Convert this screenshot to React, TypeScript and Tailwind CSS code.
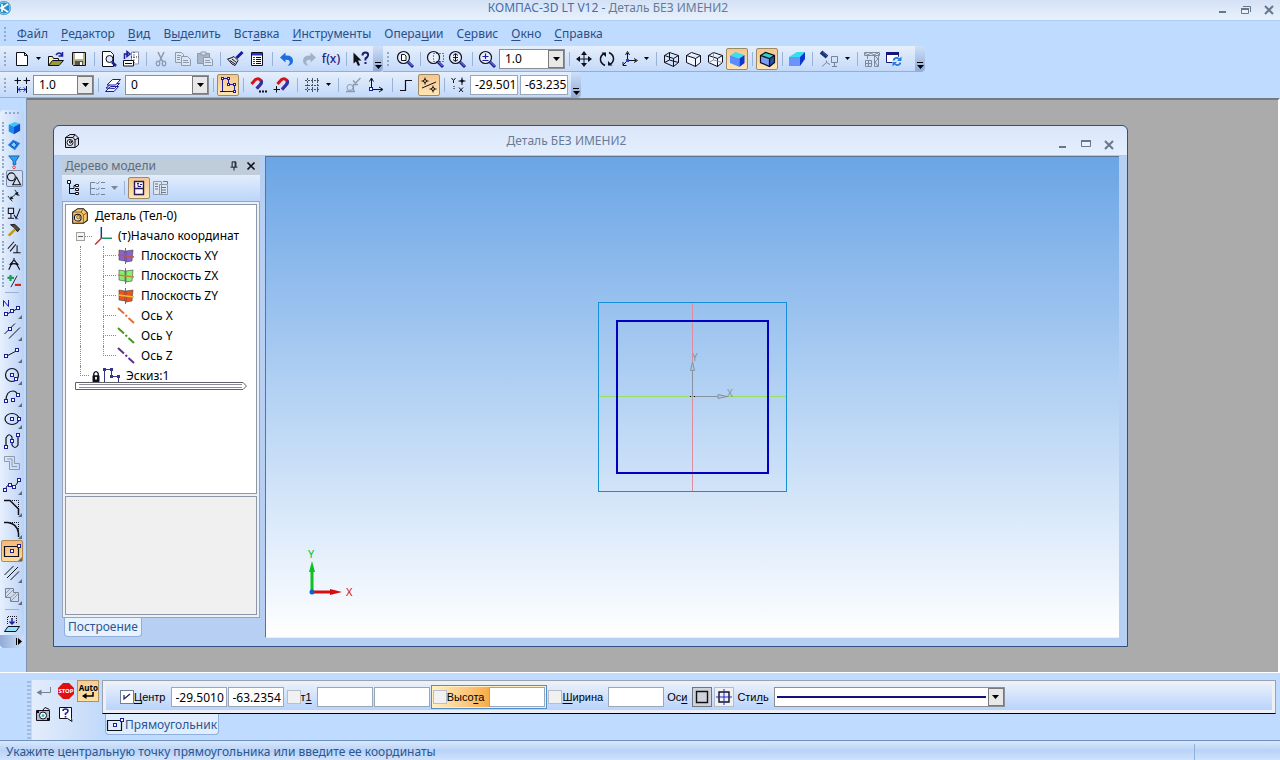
import { ReactNode } from "react";
import clsx from "clsx";

const K = "#10101c";
const N = "#1c1c9c";
const G = "#8d9aae";

// small square used for the sketch nodes, kept on whole pixels
const Node = ({ x, y }: { x: number; y: number }) => (
  <rect x={Math.floor(x) - 1.5} y={Math.floor(y) - 1.5} width="3" height="3" fill="#fff" stroke={N} />
);

const cubeEdges = "M1.500 4.500 L6.500 1.500 L15.500 4.500 V11.500 L10.500 15.500 L1.500 11.500 Z M1.500 4.500 L10.500 7.500 L15.500 4.500 M10.500 7.500 V15.500";

const lens = (
  <>
    <circle cx="6.500" cy="6.500" r="6" fill="#e8f0ff" stroke={K} strokeWidth="1.200" />
    <path d="M11 11 L16 16" stroke={N} strokeWidth="3" />
    <path d="M11.500 11 L15.500 15" stroke="#8aa0ee" />
  </>
);

const icons: Record<string, ReactNode> = {
  doc: <path d="M2.500 1.500 H10.500 L13.500 4.500 V14.500 H2.500 Z M10.500 1.500 V4.500 H13.500" fill="#fff" stroke={K} />,
  open: (
    <>
      <path d="M0.500 14.500 V5.500 H4.500 L5.500 7.500 H10.500 V9" fill="#f5f3a0" stroke={K} />
      <path d="M0.500 14.500 L4.500 9.500 H15.500 L11 14.500 Z" fill="#9a9a3c" stroke={K} />
      <path d="M8 4 Q11 0 14 4 M14.500 1 V5 H10.500" stroke={N} strokeWidth="1.500" fill="none" />
    </>
  ),
  save: (
    <>
      <path d="M1.500 1.500 H14.500 V14.500 H2.500 L1.500 13.500 Z" fill="#b9b283" stroke={K} />
      <path d="M4 2 H12 V8 H4 Z" fill="#fff" />
      <path d="M4 10 H12 V14 H4 Z" fill="#555" />
      <path d="M9 11 H11 V14 H9 Z" fill="#fff" />
    </>
  ),
  preview: (
    <>
      <path d="M1.500 0.500 H9.500 L12.500 3.500 V15.500 H1.500 Z" fill="#fff" stroke={K} />
      <circle cx="8.500" cy="8" r="3.500" fill="#dfe9ff" stroke={K} />
      <path d="M11 11 L15 15" stroke={N} strokeWidth="2.500" />
    </>
  ),
  print: (
    <>
      <path d="M8.500 1 H15.500 V13 H8.500 Z" fill="#fff" stroke={G} />
      <path d="M11 1 V13 M8 6 H16" stroke={K} strokeDasharray="1 1.500" />
      <path d="M0.500 9.500 H10.500 V15 H0.500 Z" fill="#fff" stroke={K} />
      <path d="M2 12.500 H9" stroke={K} />
      <path d="M1.500 8 V3 H5 M4 0.500 L7 3 L4 5.500 Z" stroke={N} strokeWidth="1.500" />
    </>
  ),
  cut: (
    <>
      <path d="M5 1 L9.500 10.500 M11 1 L6.500 10.500" stroke={G} strokeWidth="1.500" />
      <ellipse cx="5" cy="12.500" rx="1.700" ry="2.300" fill="none" stroke={G} strokeWidth="1.300" />
      <ellipse cx="11" cy="12.500" rx="1.700" ry="2.300" fill="none" stroke={G} strokeWidth="1.300" />
    </>
  ),
  copy: (
    <>
      <path d="M0.500 1.500 H6.500 L8.500 3.500 V11.500 H0.500 Z" fill="#dde6f3" stroke={G} />
      <path d="M6.500 5.500 H12.500 L15.500 8.500 V14.500 H6.500 Z" fill="#dde6f3" stroke={G} />
      <path d="M2 4.500 H6 M2 6.500 H5 M2 8.500 H5 M8 9.500 H13 M8 11.500 H14" stroke={G} />
    </>
  ),
  paste: (
    <>
      <path d="M0.500 2.500 H12.500 V12.500 H0.500 Z" fill="#a9b5c6" stroke={G} />
      <path d="M4 1 H9 V4 H4 Z" fill="#d8e0ec" stroke={G} />
      <path d="M6.500 6.500 H13 L15.500 9 V14.500 H6.500 Z" fill="#dde6f3" stroke={G} />
      <path d="M8 9.500 H13 M8 11.500 H14" stroke={G} />
    </>
  ),
  brush: (
    <>
      <path d="M15.500 1 L9.500 7" stroke={N} strokeWidth="3" />
      <path d="M0.500 8 L4 7 L7 5.500 L11 9.500 L8 14.500 L5 13 Z" fill="#d8e2ee" stroke={K} />
      <path d="M3 9.500 L8 13 M5 8 L9.500 11.500" stroke={K} />
    </>
  ),
  props: (
    <>
      <path d="M2.500 1.500 H13.500 V14.500 H2.500 Z" fill="#fff" stroke={K} />
      <path d="M3 2 H13 V4.500 H3 Z" fill="#2236c8" />
      <path d="M4 6.500 H6 M4 8.500 H6 M4 10.500 H6 M4 12.500 H6" stroke="#2236c8" />
      <path d="M7 6.500 H12 M7 8.500 H12 M7 10.500 H12 M7 12.500 H12" stroke={K} />
    </>
  ),
  undo: <path d="M1 6.500 L6.500 1.500 V4.500 Q14 4 14 10 Q14 14 8.500 15 Q11.500 12 10.500 10 Q9.500 8.500 6.500 8.700 V11.500 Z" fill="#1c6fe0" />,
  redo: <path d="M15 6.500 L9.500 1.500 V4.500 Q2 4 2 10 Q2 14 7.500 15 Q4.500 12 5.500 10 Q6.500 8.500 9.500 8.700 V11.500 Z" fill="#a3b1c4" />,
  help: (
    <>
      <path d="M0.500 1.500 V12.500 L3 10.500 L5 15 L7 14 L5 9.500 H8.500 Z" fill={K} />
      <path d="M9.500 4.500 Q9.500 1.500 12.500 1.500 Q15.500 1.500 15 4.500 Q14.500 6.500 12.500 7.500 V9.500 M12.500 11 V13" fill="none" stroke="#1b1b70" strokeWidth="2" />
    </>
  ),
  zoomDoc: (
    <>
      {lens}
      <path d="M4.500 3.500 H7.500 L9 5 V9.500 H4.500 Z" fill="#fff" stroke={K} />
    </>
  ),
  zoomFrame: (
    <>
      {lens}
      <path d="M6.500 2.500 H16.500 V10.500 H6.500 Z" fill="none" stroke={K} strokeDasharray="1 2" />
    </>
  ),
  zoomScale: (
    <>
      {lens}
      <path d="M6.500 3 V10 M4 4.500 L6.500 2.500 L9 4.500 M4 8.500 L6.500 10.500 L9 8.500 M4 6.500 H9" fill="none" stroke={K} />
    </>
  ),
  zoomPlus: (
    <>
      {lens}
      <path d="M6.500 2.500 V8 M3.500 5.500 H9.500 M3.500 9.500 H9.500" stroke={N} strokeWidth="1.200" />
    </>
  ),
  move: (
    <>
      <path d="M8 2 V14 M2 8 H14" stroke={K} />
      <path d="M8 0 L11 4 H5 Z M8 16 L11 12 H5 Z M0 8 L4 5 V11 Z M16 8 L12 5 V11 Z" fill={K} />
    </>
  ),
  rotate: (
    <>
      <path d="M6 14.500 Q1 12 1.500 7.500 Q2 4 5 2.500 M10 1.500 Q15 4 14.500 8.500 Q14 12 11 13.500" fill="none" stroke={K} strokeWidth="1.500" />
      <path d="M2.500 1.500 H7 V6 Z M13.500 14.500 H9 V10 Z" fill={K} />
    </>
  ),
  axes: (
    <>
      <path d="M5.500 2 V9.500 H14 M5.500 9.500 L1 14" fill="none" stroke={K} />
      <path d="M3.500 4 L5.500 0.500 L7.500 4 M12 7.500 L15.500 9.500 L12 11.500 M1 11 V14.500 H4.500" fill="none" stroke={K} />
      <rect x="4" y="8" width="3" height="3" fill="#3040d0" />
    </>
  ),
  cubeWire: (
    <>
      <path d={cubeEdges} fill="none" stroke={K} />
      <path d="M6.500 1.500 V9 L1.500 11.500 M6.500 9 L15.500 11.500" fill="none" stroke={K} />
    </>
  ),
  cubeHidden: <path d={cubeEdges} fill="#f2f7ff" stroke={K} />,
  cubeThin: (
    <>
      <path d={cubeEdges} fill="#f2f7ff" stroke={K} />
      <path d="M6.500 1.500 V9 L1.500 11.500 M6.500 9 L15.500 11.500" fill="none" stroke={G} />
    </>
  ),
  cubeShade: (
    <>
      <path d="M1 4.500 L6.500 1 L15.500 4 L10.500 7.500 Z" fill="#35e2ee" />
      <path d="M1 4.500 L10.500 7.500 V16 L1 12 Z" fill="#5a8cff" />
      <path d="M10.500 7.500 L15.500 4 V12 L10.500 16 Z" fill="#0a37d0" />
    </>
  ),
  cubeShadeWire: (
    <>
      <path d="M1 4.500 L6.500 1 L15.500 4 L10.500 7.500 Z" fill="#2fd6c8" />
      <path d="M1 4.500 L10.500 7.500 V16 L1 12 Z" fill="#7d9cf5" />
      <path d="M10.500 7.500 L15.500 4 V12 L10.500 16 Z" fill="#2850a8" />
      <path d={cubeEdges} fill="none" stroke={K} strokeWidth="1.200" />
    </>
  ),
  persp: (
    <>
      <path d="M0 6 L8 1 H16 L11 6 Z" fill="#2fe0ee" />
      <path d="M0 6 H11 V15 H0 Z" fill="#6a93fb" />
      <path d="M11 6 L16 1 V8 L11 15 Z" fill="#0a37d0" />
    </>
  ),
  lamp: (
    <>
      <path d="M0 1 L6 6" stroke="#15307c" strokeWidth="4" />
      <path d="M2 1.500 L6 5" stroke="#5a86d8" strokeDasharray="1 1" />
      <path d="M5.500 9.500 V11.500 L1 15.500 M5.500 11.500 L9 13.500" stroke="#76849a" />
      <path d="M10.500 5.500 H16.500 V11.500 H10.500 Z M13.500 11.500 V15 M11 15.500 H16" fill="none" stroke="#76849a" />
    </>
  ),
  crane: (
    <>
      <path d="M0.500 1.500 H15.500 V4.500 H0.500 Z M10.500 4.500 V15.500 H14.500 V4.500 M3.500 4.500 V8" fill="none" stroke="#7f8b9c" />
      <path d="M1 2 L4 4 L7 2 L10 4 L13 2 L15 4 M11 5 L14 8 L11 11 L14 15" fill="none" stroke="#7f8b9c" />
      <path d="M1.500 9.500 H7.500 V15.500 H1.500 Z M1.500 12.500 H7.500 M4.500 9.500 V15.500" fill="none" stroke="#7f8b9c" />
    </>
  ),
  refresh: (
    <>
      <path d="M0.500 1.500 H12.500 V11.500 H0.500 Z" fill="#fff" stroke="#15157c" />
      <path d="M0 1 H13 V4 H0 Z" fill="#15157c" />
      <circle cx="11" cy="10.500" r="5" fill="#dfeafc" />
      <path d="M7.500 9.500 Q8.500 6.500 11.500 7 L13.500 8 M14.500 11.500 Q13.500 14.500 10.500 14 L8.500 13" fill="none" stroke="#2878e0" strokeWidth="1.800" />
      <path d="M15.500 5.500 V10 H11 Z M6.500 15.500 V11 H11 Z" fill="#2878e0" />
    </>
  ),
  step: (
    <>
      <path d="M3.500 0.500 V7 M0.500 3.500 H7 M12.500 0.500 V7 M9.500 3.500 H16 M3.500 9 V16 M12.500 9 V16" stroke={K} />
      <path d="M3.500 2 L5 3.500 L3.500 5 L2 3.500 Z M12.500 2 L14 3.500 L12.500 5 L11 3.500 Z" fill={K} />
      <path d="M4 12.500 H12 M6.500 10.500 L4 12.500 L6.500 14.500 M9.500 10.500 L12 12.500 L9.500 14.500" fill="none" stroke="#2630d8" />
    </>
  ),
  layers: (
    <>
      <path d="M0.500 14.500 L5.500 9.500 H13.500 L9 14.500 Z M1 11 L6.500 6.500 H14.500 L9.500 11.500 Z" fill="#e8f0ff" stroke={N} />
      <path d="M2 8 L7.500 2.500 H15.500 L10.500 8 Z" fill="#fff" stroke={N} />
    </>
  ),
  sketch: (
    <>
      <path d="M2.500 2.500 V14.500 M2.500 1.500 H8.500 V7.500 H14.500 V14.500 M2.500 14.500 H14.500" fill="none" stroke={N} />
      <rect x="1.500" y="0.500" width="2" height="2" fill="#fff" stroke={N} />
      <rect x="7.500" y="0.500" width="2" height="2" fill="#fff" stroke={N} />
      <rect x="7.500" y="6.500" width="2" height="2" fill="#fff" stroke={N} />
      <rect x="13.500" y="6.500" width="2" height="2" fill="#fff" stroke={N} />
      <rect x="13.500" y="13.500" width="2" height="2" fill="#fff" stroke={N} />
      <path d="M0 14.500 H5" stroke={K} />
    </>
  ),
  magnetDots: (
    <>
      <path d="M1.500 7 L5 3 Q8 0.500 10.500 3 Q12.500 5.500 10 8 L7 11.500" fill="none" stroke="#d41414" strokeWidth="3" />
      <path d="M10 8 Q12.500 5.500 11 3.500 M10 8 L6.500 11.500" fill="none" stroke="#2038b8" strokeWidth="3" />
      <path d="M9 14.500 H11 M12 14.500 H14 M15 14.500 H17" stroke={K} strokeWidth="2" />
    </>
  ),
  magnetCross: (
    <>
      <path d="M4.500 7 L8 3 Q11 0.500 13.500 3 Q15.500 5.500 13 8 L9 12.500" fill="none" stroke="#d41414" strokeWidth="3" />
      <path d="M13 8 Q15.500 5.500 14 3.500 M13 8 L9 12.500" fill="none" stroke="#2038b8" strokeWidth="3" />
      <path d="M3.500 9 V15.500 M0.500 12.500 H7" stroke={K} />
    </>
  ),
  grid: <path d="M3.500 1 V15 M8.500 1 V15 M13.500 1 V15 M1 3.500 H16 M1 8.500 H16 M1 12.500 H16" stroke="#4c5364" strokeDasharray="2 1" />,
  param: (
    <>
      <circle cx="5" cy="10.500" r="3" fill="none" stroke={G} />
      <path d="M1 14.500 H10 M8.500 14 V7.500 H13 M8 3.500 L10.500 6 L15.500 1" fill="none" stroke={G} strokeWidth="1.300" />
    </>
  ),
  ortho: (
    <>
      <path d="M3.500 2 V12.500 H14" fill="none" stroke={K} />
      <path d="M1.500 4.500 L3.500 1 L5.500 4.500 M11 10 L15 12.500 L11 15" fill="none" stroke={K} />
      <Node x={3.5} y={12.5} />
    </>
  ),
  round: <path d="M1 13.500 H6.500 V3.500 H13" fill="none" stroke={K} strokeWidth="1.200" />,
  snap: (
    <>
      <path d="M1 11 L15 5" stroke={K} />
      <path d="M4 0.500 V7.500 M0.500 4 H7.500 M12 8.500 V15.500 M8.500 12 H15.500" stroke={K} />
      <circle cx="4" cy="4" r="1.500" fill="#f7c878" stroke={K} />
      <circle cx="12" cy="12" r="1.500" fill="#f7c878" stroke={K} />
    </>
  ),
  yx: (
    <>
      <path d="M0.500 1 L2.500 3.500 L4.500 1 M2.500 3.500 V6 M8 10.500 L12 15 M12 10.500 L8 15" fill="none" stroke={K} />
      <path d="M11 0.500 V8 M7.500 4 H14.500" stroke={K} />
      <path d="M11 2 L13 4 L11 6 L9 4 Z" fill={K} />
      <path d="M3 9 V12" stroke={K} strokeDasharray="1 1" />
    </>
  ),
  geomBox: (
    <>
      <path d="M2 4 L9 1 L15 3 L8 6.500 Z" fill="#35c8f4" />
      <path d="M2 4 L8 6.500 V15 L2 12 Z" fill="#1a8cf0" />
      <path d="M8 6.500 L15 3 V11 L8 15 Z" fill="#0a4cd0" />
    </>
  ),
  surface: (
    <>
      <path d="M1 8 L7 2 L15 6 L9 14 Z" fill="#1e78e6" />
      <path d="M4 8 L8 4 L11 8 L8 11 Z" fill="#7fd6fa" stroke="#0a3da8" />
    </>
  ),
  filter: (
    <>
      <path d="M2 1 H14 L10 7 V11 H7 V7 Z" fill="#2aa0f0" stroke="#1858a8" />
      <circle cx="8" cy="14" r="1.500" fill="#fff" stroke="#d02828" />
    </>
  ),
  shapes: (
    <>
      <circle cx="5" cy="5.500" r="4.500" fill="none" stroke={K} strokeWidth="1.200" />
      <path d="M11 6 L15.500 14.500 H6.500 Z" fill="none" stroke={K} strokeWidth="1.200" />
    </>
  ),
  dim: (
    <>
      <path d="M1 8 L6 14 M9 1 L14 8 M4.500 10.500 L11.500 4.500" stroke={K} fill="none" />
      <path d="M3 12 L4.500 8 L7.500 11 Z M13 3.500 L9 4.500 L12 8 Z" fill={K} />
    </>
  ),
  rough: (
    <>
      <path d="M1.500 2.500 H7.500 V8.500 H1.500 Z M4.500 8.500 V14 M1 14 H8 M8 10 L10.500 14 L15 3" fill="none" stroke={K} strokeWidth="1.200" />
      <path d="M9 14.500 H13" stroke="#3848c8" />
    </>
  ),
  hammer: (
    <>
      <path d="M2 14.500 L9 7.500" stroke="#c49a10" strokeWidth="3" />
      <path d="M4 2 L9 1.500 L14.500 7 L12 10 L8.500 5.500 Z" fill="#5a4a2c" stroke={K} />
    </>
  ),
  parPerp: <path d="M1 10 L8 2 M3.500 13 L10 5 M7 14.500 H15.500 M11.500 14.500 V6" fill="none" stroke={K} strokeWidth="1.200" />,
  measure: <path d="M8 1 V4 M7 4 L2 14.500 M9 4 L14.500 14.500 M4.500 9 Q8 6 11.500 9 M8 3.500 L3 9 M8 3.500 L13 9" fill="none" stroke={K} strokeWidth="1.300" />,
  plusMinus: (
    <>
      <path d="M4 1 V8 M0.500 4.500 H8" stroke="#18a050" strokeWidth="2.500" />
      <path d="M4.500 15 L11.500 2" stroke={K} />
      <path d="M9 12.500 H16" stroke="#d82020" strokeWidth="2.500" />
    </>
  ),
  pointN: (
    <>
      <path d="M-0.500 5.500 V-0.500 L4.500 5.500 V-1" fill="none" stroke={N} />
      <path d="M1 14 L15 7" stroke={K} />
      <Node x={2} y={13} />
      <Node x={8} y={10} />
      <Node x={14} y={7} />
    </>
  ),
  parLine: (
    <>
      <path d="M0.500 11 L11 0.500 M5 15.500 L16 4.500" stroke={K} />
      <Node x={6} y={6} />
    </>
  ),
  segment: (
    <>
      <path d="M2 11.500 L14 5" stroke={K} />
      <Node x={2.5} y={11.5} />
      <Node x={13.5} y={5} />
    </>
  ),
  circle: (
    <>
      <circle cx="8" cy="8" r="6.500" fill="none" stroke={K} strokeWidth="1.200" />
      <Node x={8} y={8} />
      <Node x={12.5} y={12.5} />
    </>
  ),
  arc: (
    <>
      <path d="M2 12 Q2 2 9 2 Q12 2 14 6" fill="none" stroke={K} strokeWidth="1.200" />
      <Node x={2} y={12} />
      <Node x={9} y={11} />
      <Node x={14} y={6} />
    </>
  ),
  ellipse: (
    <>
      <ellipse cx="8" cy="8" rx="7" ry="5.500" fill="none" stroke={K} strokeWidth="1.200" />
      <Node x={8} y={8} />
      <Node x={15} y={8} />
    </>
  ),
  curve: (
    <>
      <path d="M2 14 V5 Q5 -1 8 4 V12 Q11 17 14 12 V2" fill="none" stroke={K} strokeWidth="1.200" />
      <Node x={2} y={14} />
      <Node x={8} y={8} />
      <Node x={14} y={2} />
    </>
  ),
  polyGray: <path d="M0.500 1.500 H10.500 V8.500 H15.500 V14.500 H5.500 V6.500 H0.500 Z M3 4 H8 V11.500 H13" fill="none" stroke={G} />,
  spline: (
    <>
      <path d="M1.500 13 Q3 6 7 8.500 Q11 12 14.500 3.500" fill="none" stroke={K} />
      <Node x={1.5} y={13} />
      <Node x={6} y={8} />
      <Node x={10} y={10} />
      <Node x={15} y={3} />
    </>
  ),
  chamfer: (
    <>
      <path d="M0 1.500 H6 L14.500 10 V16" fill="none" stroke={K} strokeWidth="1.500" />
      <path d="M6 1.500 H14.500 V10" fill="none" stroke={K} strokeDasharray="1 1" />
    </>
  ),
  fillet: (
    <>
      <path d="M0 1.500 H4 Q13.500 3 14.500 12 V16" fill="none" stroke={K} strokeWidth="1.500" />
      <path d="M6 1.500 H14.500 V10" fill="none" stroke={K} strokeDasharray="1 1" />
    </>
  ),
  rect: (
    <>
      <path d="M0.500 3.500 H14.500 V13.500 H0.500 Z" fill="none" stroke={K} strokeWidth="1.200" />
      <Node x={8} y={8.5} />
      <Node x={15} y={3.5} />
    </>
  ),
  hatch: <path d="M0.500 10 L9.500 1 M3 13 L14 2 M6.500 15 L15 6.500" stroke={K} />,
  contour: (
    <>
      <path d="M1.500 1.500 H9.500 V5.500 H14.500 V14.500 H6.500 V10.500 H1.500 Z" fill="#d3dcea" stroke="#76849a" />
      <path d="M2 6 L6 2 M2 10 L9 3 M6 11 L12 6 M7 14 L14 7" fill="none" stroke={G} />
    </>
  ),
  project: (
    <>
      <path d="M3.500 8 V0.500 H12.500 V8" fill="none" stroke={K} strokeDasharray="1 1" />
      <path d="M8 2 V7 M5.500 5.500 L8 8 L10.500 5.500" fill="none" stroke={N} strokeWidth="1.500" />
      <path d="M0.500 15.500 L4 10.500 H15.500 L12 15.500 Z" fill="#8fe4f8" stroke={K} />
    </>
  ),
  part: (
    <>
      <path d="M1.500 4.500 L6 1.500 H11 L14.500 5 V12 L11 14.500 H1.500 Z" fill="#d8dce4" stroke={K} />
      <path d="M1.500 4.500 H9 L11 7 V14.500 M9 4.500 L11 1.500 M11 7 L14.500 5" fill="none" stroke={K} />
      <circle cx="6" cy="9.500" r="3" fill="#fff" stroke={K} />
      <circle cx="6.500" cy="9" r="1.200" fill="#aab" stroke={K} />
    </>
  ),
  partGold: (
    <>
      <path d="M1.500 4.500 L6 1.500 H11 L14.500 5 V12 L11 14.500 H1.500 Z" fill="#f8c66e" stroke={K} strokeWidth="0.900" />
      <path d="M1.500 4.500 H9 L11 7 V14.500 M9 4.500 L11 1.500 M11 7 L14.500 5" fill="none" stroke="#6a4a18" strokeWidth="0.700" />
      <circle cx="6" cy="9.500" r="3" fill="#fbe2b0" stroke={K} strokeWidth="0.900" />
      <circle cx="6.500" cy="9" r="1.500" fill="#f8c66e" stroke="#6a4a18" strokeWidth="0.700" />
    </>
  ),
  treeView: (
    <>
      <path d="M3.500 3 V13.500 H10 M3.500 8.500 H8 V5.500 H10" fill="none" stroke={K} />
      <path d="M1.500 0.500 H4.500 V3.500 H1.500 Z M9.500 4.500 H12.500 V6.500 H9.500 Z M9.500 8.500 H12.500 V10.500 H9.500 Z M9.500 12.500 H12.500 V14.500 H9.500 Z" fill="#fff" stroke={K} />
    </>
  ),
  treeList: <path d="M6 2.500 H1.500 V14.500 H6 M1.500 8.500 H6 M7 2.500 L8.500 4 L10.500 1.500 M7 8.500 L8.500 10 L10.500 7.500 M7 14 L8.500 15 L10.500 13 M12 2.500 H16 M12 8.500 H16 M12 14.500 H16" fill="none" stroke="#76849a" />,
  treeDoc: (
    <>
      <path d="M3.500 1.500 H12.500 V14.500 H3.500 Z M3.500 8.500 H12.500" fill="#fdfaff" stroke="#2a1a50" strokeWidth="1.400" />
      <path d="M6 3.500 H8 M7 3.500 V6.500 H10 M9 4.500 H11" fill="none" stroke={N} />
    </>
  ),
  treePages: (
    <>
      <path d="M0.500 1.500 H8.500 V14.500 H0.500 Z M6.500 4.500 H14.500 V14.500 H6.500 Z" fill="#dde6f3" stroke={G} />
      <path d="M2 4 H5 M2 6.500 H5 M2 9 H5 M8 7.500 H13 M8 10 H13 M8 12.500 H13 M10 1.500 H14.500 V4" fill="none" stroke="#6b7890" />
    </>
  ),
  origin: (
    <>
      <path d="M6.500 0 V10" stroke="#2030a0" strokeWidth="1.300" />
      <path d="M6.500 10 H16" stroke="#209060" strokeWidth="1.300" />
      <path d="M6.500 10 L1 15.500" stroke="#c03030" strokeWidth="1.300" />
    </>
  ),
  lock: (
    <>
      <path d="M5.500 8 V5 Q8 1 10.500 5 V8" fill="none" stroke={K} strokeWidth="1.500" />
      <rect x="4" y="7" width="8" height="8" rx="1" fill={K} />
      <rect x="7" y="9" width="2" height="3" fill="#fff" />
    </>
  ),
  sketchTree: (
    <>
      <path d="M1.500 15 V1.500 H8.500 V8.500 H15.500 V15" fill="none" stroke="#34348c" />
      <path d="M0 0 H3 V3 H0 Z M7 0 H10 V3 H7 Z M7 7 H10 V10 H7 Z M14 7 H17 V10 H14 Z" fill="#34348c" />
    </>
  ),
  enter: (
    <>
      <path d="M15.500 4 V9.500 H5" stroke="#77808e" />
      <path d="M6.500 6.500 V12.500 L1.500 9.500 Z" fill="#77808e" />
    </>
  ),
  camera: (
    <>
      <path d="M1.500 4.500 H14.500 V14.500 H1.500 Z" fill="#b7bcc4" stroke={K} />
      <path d="M8 4 L10 1.500 L14.500 3.500" fill="none" stroke={K} />
      <circle cx="8" cy="9.500" r="3.500" fill="#fff" stroke={K} />
      <circle cx="8" cy="9.500" r="1.500" fill="#28c0c8" />
      <path d="M2 5 H4 V7 H2 Z M12 12 H14 V14 H12 Z" fill={K} />
    </>
  ),
  question: (
    <>
      <path d="M1.500 1.500 H13.500 V12.500 L14 15.500 L9.500 12.500 H1.500 Z" fill="#fff" stroke={K} />
      <path d="M5 5 Q5 3 7.500 3 Q10 3 10 5 Q10 6.500 7.500 7.500 V9 M7.500 10 V11.500" fill="none" stroke="#2020a0" strokeWidth="1.600" />
    </>
  ),
  axisBox: <path d="M2.500 2.500 H13.500 V13.500 H2.500 Z" fill="none" stroke={K} strokeWidth="1.400" />,
  axisCross: (
    <>
      <path d="M3 3 H13 V13 H3 Z" fill="none" stroke={K} strokeWidth="1.400" />
      <path d="M8 0 V16 M0 8 H16" stroke="#2222c0" />
    </>
  ),
  pin: <path d="M5.500 2.500 H10.500 V9 M5.500 2.500 V9 M9.500 2.500 V9 M3.500 9.500 H12.500 M8 9.500 V14" fill="none" stroke={K} strokeWidth="1.300" />,
  cross: <path d="M4 4 L12 12 M12 4 L4 12" stroke={K} strokeWidth="2" />,
  winMin: <path d="M4 11 H11 V13 H4 Z" fill="#66778f" />,
  winMax: (
    <>
      <path d="M3.500 5.500 H12.500 V11.500 H3.500 Z" fill="#eaf1fb" stroke="#66778f" />
      <path d="M3 5 H13 V7 H3 Z" fill="#66778f" />
    </>
  ),
  winRestore: (
    <>
      <path d="M5 6.500 H12.500 V12" fill="none" stroke="#66778f" />
      <path d="M3.500 8.500 H10.500 V13.500 H3.500 Z" fill="#eaf1fb" stroke="#66778f" />
      <path d="M3 8 H11 V10 H3 Z" fill="#66778f" />
    </>
  ),
  winClose: <path d="M4 6 L12 14 M12 6 L4 14" stroke="#66778f" strokeWidth="2" />,
  logo: (
    <>
      <circle cx="4" cy="8" r="7" fill="#2b8cc8" />
      <path d="M-2 8 H2 M2 4 V12 M2 8 L8 4 M2 8 L8 12" stroke="#fff" strokeWidth="1.600" fill="none" />
      <circle cx="4" cy="8" r="6" fill="none" stroke="#9ed2f0" />
    </>
  ),
};

function Icon({ name, className = "h-4 w-4" }: { name: string; className?: string }) {
  return (
    <svg viewBox="0 0 16 16" fill="none" aria-hidden="true" className={clsx("shrink-0 overflow-visible", className)}>
      {icons[name]}
    </svg>
  );
}

// "_" goes before the underlined hot key letter
function Hot({ text }: { text: string }) {
  const [before, after] = text.split("_");
  return (
    <span>
      {before}
      <u className="underline-offset-2">{after[0]}</u>
      {after.slice(1)}
    </span>
  );
}

function Tool({ name, label, active, className = "w-[22px]" }: { name: string; label: string; active?: boolean; className?: string }) {
  return (
    <button
      aria-label={label}
      className={clsx(
        "flex h-[22px] shrink-0 items-center justify-center rounded-xs border",
        active ? "border-[#9c8a64] bg-linear-to-b from-[#f5c690] to-[#ffe6b4]" : "border-transparent",
        className
      )}
    >
      <Icon name={name} />
    </button>
  );
}

const Sep = () => (
  <span className="flex w-2 shrink-0 justify-center">
    <span className="h-[14px] border-l border-[#9ab2d6]" />
  </span>
);

const Grip = () => <span className="mr-[5px] ml-1 h-[14px] w-0.5 shrink-0 border-l-2 border-dotted border-[#8fa9cf]" />;

const Arrow = ({ className = "text-black" }: { className?: string }) => (
  <svg viewBox="0 0 7 4" aria-hidden="true" className={clsx("h-1 w-[7px] shrink-0", className)}>
    <path d="M0 0 H7 L3.500 4 Z" fill="currentColor" />
  </svg>
);

const Drop = ({ label }: { label: string }) => (
  <button aria-label={label} className="flex h-[22px] w-[11px] shrink-0 items-center justify-center">
    <svg viewBox="0 0 5 3" className="h-[3px] w-[5px]">
      <path d="M0 0 H5 L2.500 3 Z" fill="#000" />
    </svg>
  </button>
);

const Overflow = () => (
  <button aria-label="Параметры панелей" className="flex w-[10px] shrink-0 flex-col items-center justify-end gap-0.5 self-stretch rounded-r-sm bg-linear-to-b from-[#cfe0f8] to-[#8fabd6] pb-0.5">
    <span className="h-px w-[6px] bg-black" />
    <Arrow />
  </button>
);

const Strip = ({ label, children }: { label: string; children: ReactNode }) => (
  <div role="toolbar" aria-label={label} className="flex h-[26px] items-center rounded-r-sm border-b border-[#8fb0dd] bg-linear-to-b from-[#e6effc] to-[#c3d9fa]">
    {children}
  </div>
);

function Combo({ value, label, className }: { value: string; label: string; className: string }) {
  return (
    <span className={clsx("relative flex h-5 shrink-0 border border-[#8b9096] bg-white", className)}>
      <select aria-label={label} className="w-full appearance-none bg-transparent pl-[5px] text-xs leading-4 text-black">
        <option>{value}</option>
      </select>
      <span className="pointer-events-none absolute inset-y-0 right-0 flex w-4 items-center justify-center border border-[#7a7a7a] bg-[#e8e8e8]">
        <Arrow />
      </span>
    </span>
  );
}

const Field = ({ value = "", label, className }: { value?: string; label: string; className: string }) => (
  <input aria-label={label} defaultValue={value} className={clsx("h-5 shrink-0 border border-[#98a7bb] bg-white pl-1 text-xs text-black outline-none", className)} />
);

function Check({ label, checked }: { label: string; checked?: boolean }) {
  return (
    <label className="flex shrink-0 items-center font-['Liberation_Sans',Arial,sans-serif] text-[11px] text-black">
      <span className="relative flex h-[14px] w-[14px]">
        <input
          type="checkbox"
          defaultChecked={checked}
          className="peer h-[14px] w-[14px] appearance-none border border-[#b9bfc8] bg-[#f1f1f1] checked:border-[#6f7f95] checked:bg-white"
        />
        <svg viewBox="0 0 14 14" className="pointer-events-none absolute inset-0 hidden h-[14px] w-[14px] peer-checked:block">
          <path d="M4 5 V9 L10 4" fill="none" stroke="#1c1c60" strokeWidth="1.200" />
        </svg>
      </span>
      <Hot text={label} />
    </label>
  );
}

const menu = ["_Файл", "_Редактор", "_Вид", "В_ыделить", "Вст_авка", "_Инструменты", "Опера_ции", "С_ервис", "_Окно", "_Справка"];

const modes = [
  ["geomBox", "Редактирование детали"],
  ["surface", "Поверхности"],
  ["filter", "Фильтры"],
  ["shapes", "Геометрия"],
  ["dim", "Размеры"],
  ["rough", "Обозначения"],
  ["hammer", "Редактирование"],
  ["parPerp", "Параметризация"],
  ["measure", "Измерения"],
  ["plusMinus", "Выделение"],
];

const geometry = [
  ["pointN", "Точки"],
  ["parLine", "Вспомогательные прямые"],
  ["segment", "Отрезок"],
  ["circle", "Окружность"],
  ["arc", "Дуга"],
  ["ellipse", "Эллипс"],
  ["curve", "Непрерывный ввод"],
  ["polyGray", "Линия"],
  ["spline", "Кривая"],
  ["chamfer", "Фаска"],
  ["fillet", "Скругление"],
  ["rect", "Прямоугольник"],
  ["hatch", "Штриховка"],
  ["contour", "Собрать контур"],
];
const noFlyout = ["curve", "polyGray"];

const planes = [
  { name: "Плоскость XY", fill: "#8a62d8", line: "#c05848" },
  { name: "Плоскость ZX", fill: "#86f070", line: "#d08040" },
  { name: "Плоскость ZY", fill: "#ea5420", line: "#f0c030" },
];
const axes = [
  { name: "Ось X", color: "#e07040" },
  { name: "Ось Y", color: "#489820" },
  { name: "Ось Z", color: "#5a3090" },
];

function TitleBar() {
  return (
    <header className="relative flex h-[21px] items-start justify-between border-b border-[#a9cdf0] bg-linear-to-b from-[#d5e2f5] to-[#e8f1fd]">
      <Icon name="logo" />
      <h1 className="absolute inset-x-0 top-0 -translate-x-8 text-center text-xs leading-4 text-[#687b96]">
        <span className="text-[#4a6da8]">КОМПАС-3D LT V12 - </span>Деталь БЕЗ ИМЕНИ2
      </h1>
      <WindowButtons middle="winRestore" />
    </header>
  );
}

function WindowButtons({ middle }: { middle: string }) {
  return (
    <div className="relative flex gap-[7px] pr-[3px]">
      <button aria-label="Свернуть"><Icon name="winMin" /></button>
      <button aria-label="Развернуть"><Icon name={middle} /></button>
      <button aria-label="Закрыть"><Icon name="winClose" /></button>
    </div>
  );
}

function StandardBar() {
  return (
    <Strip label="Стандартная">
      <Grip />
      <Tool name="doc" label="Создать" />
      <Drop label="Вид документа" />
      <Tool name="open" label="Открыть" className="w-6" />
      <Tool name="save" label="Сохранить" />
      <Sep />
      <Tool name="preview" label="Просмотр" />
      <Tool name="print" label="Печать" />
      <Sep />
      <Tool name="cut" label="Вырезать" />
      <Tool name="copy" label="Копировать" />
      <Tool name="paste" label="Вставить" />
      <Sep />
      <Tool name="brush" label="Копия свойств" />
      <Tool name="props" label="Свойства" />
      <Sep />
      <Tool name="undo" label="Отменить" />
      <Tool name="redo" label="Повторить" />
      <button className="w-[22px] text-xs font-medium text-[#20208c]">f(x)</button>
      <Sep />
      <Tool name="help" label="Справка" className="mr-px w-[22px]" />
      <Overflow />
    </Strip>
  );
}

function ViewBar() {
  return (
    <Strip label="Вид">
      <Grip />
      <Tool name="zoomDoc" label="Показать все" />
      <Sep />
      <Tool name="zoomFrame" label="Увеличить рамкой" />
      <Tool name="zoomScale" label="Масштаб" />
      <Sep />
      <Tool name="zoomPlus" label="Приблизить" className="mr-px w-[22px]" />
      <Combo value="1.0" label="Текущий масштаб" className="w-[66px]" />
      <Sep />
      <Tool name="move" label="Сдвинуть" />
      <Tool name="rotate" label="Повернуть" className="w-6" />
      <Tool name="axes" label="Ориентация" />
      <Drop label="Список ориентаций" />
      <Sep />
      <Tool name="cubeWire" label="Каркас" />
      <Tool name="cubeHidden" label="Без невидимых линий" />
      <Tool name="cubeThin" label="Невидимые линии тонкие" />
      <Tool name="cubeShade" label="Полутоновое" active />
      <Sep />
      <Tool name="cubeShadeWire" label="Полутоновое с каркасом" active />
      <Sep />
      <Tool name="persp" label="Перспектива" />
      <Sep />
      <Tool name="lamp" label="Упрощения" className="w-[26px]" />
      <Drop label="Список упрощений" />
      <Sep />
      <Tool name="crane" label="Перестроить" />
      <Tool name="refresh" label="Обновить" className="mr-[10px] w-[22px]" />
      <Overflow />
    </Strip>
  );
}

function StateBar() {
  return (
    <Strip label="Текущее состояние">
      <Grip />
      <Tool name="step" label="Шаг курсора" />
      <Combo value="1.0" label="Шаг" className="w-[61px]" />
      <Sep />
      <Tool name="layers" label="Слои" className="mr-px w-[22px]" />
      <Combo value="0" label="Слой" className="w-[84px]" />
      <Sep />
      <Tool name="sketch" label="Эскиз" active />
      <Sep />
      <Tool name="magnetDots" label="Привязки" />
      <Tool name="magnetCross" label="Запретить привязки" className="w-6" />
      <Sep />
      <Tool name="grid" label="Сетка" />
      <Drop label="Настройка сетки" />
      <Sep />
      <Tool name="param" label="Параметрический режим" />
      <Tool name="ortho" label="Локальная СК" className="w-6" />
      <Sep />
      <Tool name="round" label="Ортогональное черчение" />
      <Tool name="snap" label="Округление" active />
      <Sep />
      <Tool name="yx" label="Координаты" />
      <Field value="-29.501" label="X" className="w-12" />
      <Field value="-63.235" label="Y" className="mr-[3px] ml-0.5 w-12" />
      <Overflow />
    </Strip>
  );
}

function SideBar() {
  return (
    <aside className="flex w-[27px] shrink-0 flex-col border-r border-[#8093ad] pt-3">
      <div className="mr-0.5 flex flex-col items-center rounded-t-sm bg-linear-to-r from-[#e6f0fe] to-[#bdd3f5]">
        <span className="mt-0.5 mb-[5px] w-[14px] border-t-2 border-dotted border-[#8fa9cf]" />
        {modes.map(([name, label]) => (
          <div key={name} className="flex h-[17px] items-center">
            <span className="mr-0.5 h-3 border-l-2 border-dotted border-[#8fa9cf]" />
            <button
              aria-label={label}
              className={clsx("flex h-[17px] w-[17px] items-center justify-center rounded-xs", name === "shapes" && "border border-[#7b8aa6] bg-[#d5dff0]")}
            >
              <Icon name={name} className="h-[14px] w-[14px]" />
            </button>
          </div>
        ))}
        <span className="mt-[3px] mb-[5px] w-[14px] border-t border-[#9ab2d6]" />
        {geometry.map(([name, label]) => (
          <button
            key={name}
            aria-label={label}
            className={clsx(
              "relative flex h-[22px] w-[22px] items-center justify-center rounded-xs border",
              name === "rect" ? "border-[#b08850] bg-linear-to-b from-[#f5b878] to-[#ffdca0]" : "border-transparent"
            )}
          >
            <Icon name={name} />
            {!noFlyout.includes(name) && (
              <svg viewBox="0 0 4 4" className="absolute right-0 bottom-0 h-1 w-1">
                <path d="M4 0 V4 H0 Z" fill="#5d6b80" />
              </svg>
            )}
          </button>
        ))}
        <span className="my-[3px] w-[14px] border-t border-[#9ab2d6]" />
        <Tool name="project" label="Спроецировать объект" />
        <button aria-label="Развернуть панель" className="flex h-[13px] w-full items-center justify-end rounded-b-sm bg-linear-to-r from-[#8fabd6] to-[#cfe0f8] pr-0.5">
          <svg viewBox="0 0 6 7" className="h-[7px] w-[6px]">
            <path d="M0.500 0 V7" stroke="#000" />
            <path d="M2 0 L6 3.500 L2 7 Z" fill="#000" />
          </svg>
        </button>
      </div>
    </aside>
  );
}

const dash = "border-[#8a8a8a] border-dotted";

// dotted connector of the nested tree rows
const Branch = ({ last }: { last?: boolean }) => (
  <>
    <span className={clsx("w-[23px] self-stretch border-l", dash)} />
    <span className="flex w-[13px] flex-col self-stretch">
      <span className={clsx("h-2.5 border-b border-l", dash)} />
      {!last && <span className={clsx("flex-1 border-l", dash)} />}
    </span>
  </>
);

function ModelTree() {
  return (
    <ul className="flex-1 border border-[#8c98a8] bg-white pt-px text-xs text-black">
      <li className="flex h-5 items-center pl-[5px]">
        <Icon name="partGold" className="mr-1.5 h-[18px] w-[18px]" />
        Деталь (Тел-0)
      </li>
      <li className="flex h-5 items-center pl-[10px]">
        <button aria-label="Свернуть ветвь" className="flex h-[9px] w-[9px] items-center justify-center border border-[#a0a0a0] bg-[#f4f4f4]">
          <span className="h-px w-[5px] bg-[#606060]" />
        </button>
        <span className={clsx("mr-0.5 w-[7px] border-t", dash)} />
        <Icon name="origin" className="mr-1.5 h-[18px] w-[18px]" />
        (т)Начало координат
      </li>
      {planes.map((p) => (
        <li key={p.name} className="flex h-5 items-center pl-[14px]">
          <Branch />
          <svg viewBox="0 0 16 16" className="mr-[7px] ml-0.5 h-4 w-4">
            <path d="M1 2 L7 3 V13 L1 12 Z M8 3 L15 2 L14 13 L8 14 Z" fill={p.fill} stroke="#444" strokeWidth="0.600" />
            <path d="M7.500 0 V16" stroke="#5a70a0" />
            <path d="M0 7 L16 9" stroke={p.line} strokeWidth="1.300" />
          </svg>
          {p.name}
        </li>
      ))}
      {axes.map((a, i) => (
        <li key={a.name} className="flex h-5 items-center pl-[14px]">
          <Branch last={i === axes.length - 1} />
          <svg viewBox="0 0 18 18" className="mr-1.5 ml-px h-[18px] w-[18px]">
            <path d="M1 1 L7 6.500 M8.500 8 L10 9.500 M11.500 11 L17 16" stroke={a.color} strokeWidth="2" />
          </svg>
          {a.name}
        </li>
      ))}
      <li className="flex h-5 items-center pl-[14px]">
        <span className={clsx("h-2.5 w-[9px] self-start border-b border-l", dash)} />
        <Icon name="lock" className="h-[14px] w-[14px]" />
        <Icon name="sketchTree" className="mr-[7px] h-4 w-4" />
        Эскиз:1
      </li>
      <li className="relative -mt-1 pr-[9px] pl-[9px]">
        <svg viewBox="0 0 172 8" preserveAspectRatio="none" className="h-2 w-full">
          <path d="M0.500 0.500 H168 L171.500 4 L168 7.500 H0.500 Z" fill="#fff" stroke="#606068" />
          <path d="M4 2.500 H167 M4 5.500 H167" stroke="#8c8c9c" />
        </svg>
      </li>
    </ul>
  );
}

function TreePanel() {
  return (
    <section className="flex w-[198px] shrink-0 flex-col pt-px">
      <div className="flex h-[18px] items-center bg-[#bfcddb] pr-0.5 pl-[3px]">
        <h3 className="flex-1 text-xs text-[#5c6b80]">Дерево модели</h3>
        <button aria-label="Закрепить" className="mr-1"><Icon name="pin" className="h-3 w-3" /></button>
        <button aria-label="Закрыть панель"><Icon name="cross" className="h-[14px] w-[14px]" /></button>
      </div>
      <div className="flex h-[26px] items-center bg-linear-to-b from-[#e2edfc] to-[#bcd5fa] pl-px">
        <Tool name="treeView" label="Отображение структуры" />
        <Tool name="treeList" label="Состав дерева" className="w-6" />
        <button aria-label="Выбор состава" className="flex w-[11px] justify-center"><Arrow className="text-[#7b8799]" /></button>
        <Sep />
        <Tool name="treeDoc" label="Раздел" active />
        <Tool name="treePages" label="Дополнительное окно" />
      </div>
      <div className="flex flex-1 flex-col gap-0.5 border border-[#98a5b8] bg-[#edf0f4] p-0.5">
        <ModelTree />
        <div className="h-[119px] border border-[#8c98a8] bg-[#f1f0f0]" />
      </div>
      <div className="flex h-5 items-start pl-0.5">
        <button className="h-[19px] rounded-b-sm border border-t-0 border-[#8fb0dd] bg-[#e8f2ff] px-[3px] text-xs leading-[18px] text-[#2b568f]">Построение</button>
      </div>
    </section>
  );
}

function Viewport() {
  return (
    <section aria-label="Модель" className="relative flex flex-1 items-center justify-center border-t border-b border-l border-t-[#5c7391] border-b-[#e6effc] border-l-[#5c7391] bg-linear-to-b from-[#6aa5e5] to-white">
      <svg viewBox="0 0 189 190" className="h-[190px] w-[189px]">
        <rect x="0.500" y="0.500" width="188" height="189" fill="none" stroke="#1490d8" />
        <path d="M94.500 1 V189" stroke="#e08ca0" />
        <path d="M1 94.500 H188" stroke="#98e060" />
        <path d="M94.500 94.500 V62 M94.500 94.500 H130" stroke="#8492a4" />
        <path d="M92.500 68.500 L94.500 60 L96.500 68.500 Z M120 92.500 L129 94.500 L120 96.500 Z" fill="#b5c4d6" stroke="#8492a4" />
        <rect x="19" y="19" width="151" height="152" fill="none" stroke="#0000c0" strokeWidth="2" />
        <path d="M92 94.500 H93 M96 94.500 H97" stroke="#000" />
        <text x="94" y="59" fontSize="10" fill="#8492a4">Y</text>
        <text x="129" y="95" fontSize="10" fill="#8492a4">X</text>
      </svg>
      <svg viewBox="0 0 54 54" className="absolute bottom-9 left-9 h-[54px] w-[54px]">
        <path d="M10 45 V22" stroke="#10c020" strokeWidth="3" />
        <path d="M10 14 L13 25 H7 Z" fill="#10c020" />
        <path d="M10 45 H29" stroke="#d80c0c" strokeWidth="3" />
        <path d="M40 45 L28 48 V42 Z" fill="#d80c0c" />
        <circle cx="10" cy="45" r="2.500" fill="#1060d0" />
        <text x="6" y="11" fontSize="11" fill="#10c020">Y</text>
        <text x="44" y="49" fontSize="11" fill="#d80c0c">X</text>
      </svg>
    </section>
  );
}

function PropertyPanel() {
  return (
    <footer className="border-t border-white pt-[7px] pr-1 pl-[27px]">
      <div className="flex">
        <span className="my-px mr-px w-1 border-x-2 border-dotted border-[#a5bbdc]" />
        <div className="grid w-[68px] shrink-0 grid-cols-3 content-start gap-y-px bg-linear-to-r from-[#e3edfc] to-[#c3daf9] pb-3">
          <Tool name="enter" label="Создать объект" />
          <button aria-label="Прервать команду" className="flex h-[22px] w-[22px] items-center justify-center">
            <svg viewBox="0 0 16 16" className="h-4 w-4">
              <path d="M5 0 H11 L16 5 V11 L11 16 H5 L0 11 V5 Z" fill="#e01010" />
              <text x="8" y="10" textAnchor="middle" fontSize="6" fontWeight="700" fill="#fff">STOP</text>
            </svg>
          </button>
          <button className="flex h-[22px] w-[22px] flex-col items-center justify-center border border-[#b09060] bg-linear-to-b from-[#f8cd98] to-[#ffe0a0] text-[8px] leading-[9px] font-bold text-black">
            Auto
            <svg viewBox="0 0 12 7" className="h-[7px] w-3">
              <path d="M11 0 V4 H4" fill="none" stroke="#000" strokeWidth="1.500" />
              <path d="M0 4 L4.500 1 V7 Z" fill="#000" />
            </svg>
          </button>
          <Tool name="camera" label="Запомнить состояние" />
          <Tool name="question" label="Справка" />
        </div>
        <div className="ml-0.5 flex min-w-0 flex-1 flex-col">
          <form aria-label="Свойства прямоугольника" className="flex h-[34px] items-center border-t border-r border-b border-l border-t-[#98a2b0] border-r-[#98a2b0] border-b-black border-l-[#98a2b0] bg-[#eef0f6] p-[3px]">
            <div className="flex h-full flex-1 items-center bg-linear-to-b from-[#e8effb] to-[#b9d3fb] pl-[14px]">
              <Check label="_Центр" checked />
              <Field value="-29.5010" label="Центр X" className="ml-[5px] w-14" />
              <Field value="-63.2354" label="Центр Y" className="mr-[3px] ml-px w-14" />
              <Check label="т_1" />
              <Field label="т1 X" className="ml-[5px] w-14" />
              <Field label="т1 Y" className="mx-px w-14" />
              <div className="mr-px flex h-6 items-center border border-[#4f8fd0] bg-[#fff0c0] px-px">
                <div className="flex h-5 items-center bg-linear-to-r from-[#fff0c0] to-[#f8ac48] pr-[5px]">
                  <Check label="Высо_та" />
                </div>
                <Field label="Высота" className="w-14" />
              </div>
              <Check label="_Ширина" />
              <Field label="Ширина" className="mr-[3px] ml-[5px] w-14" />
              <span className="font-['Liberation_Sans',Arial,sans-serif] text-[11px] text-black"><Hot text="Ос_и" /></span>
              <button type="button" aria-label="Без осей" className="ml-[5px] flex h-5 w-5 items-center justify-center border border-[#6f7780] bg-[#d0d3d8]">
                <Icon name="axisBox" />
              </button>
              <button type="button" aria-label="С осями" className="ml-0.5 flex h-5 w-5 items-center justify-center border border-[#b4bcc8] bg-[#eef1f5]">
                <Icon name="axisCross" />
              </button>
              <label htmlFor="style" className="ml-[3px] font-['Liberation_Sans',Arial,sans-serif] text-[11px] text-black"><Hot text="Сти_ль" /></label>
              <span className="relative ml-[5px] flex h-5 w-[231px] items-center border border-[#8b9096] bg-white">
                <select id="style" className="absolute inset-0 h-full w-full appearance-none bg-transparent">
                  <option />
                </select>
                <span className="pointer-events-none mx-0.5 h-0.5 flex-1 bg-[#12127a]" />
                <span className="pointer-events-none flex h-full w-4 items-center justify-center border border-[#7a7a7a] bg-[#e8e8e8]">
                  <Arrow />
                </span>
              </span>
            </div>
          </form>
          <div className="flex h-[26px] items-start pl-[3px]">
            <button className="flex h-[21px] items-center gap-0.5 rounded-b-sm border border-t-0 border-[#8fb0dd] bg-[#e0edff] px-px pt-px text-xs text-[#2b568f]">
              <Icon name="rect" />
              Прямоугольник
            </button>
          </div>
        </div>
      </div>
    </footer>
  );
}

export default function App() {
  return (
    <div className="flex min-h-screen flex-col overflow-hidden bg-[#bfdbff] font-['Noto_Sans','Open_Sans',sans-serif]">
      <TitleBar />
      <nav className="flex h-[25px] items-center">
        <Grip />
        {menu.map((item) => (
          <a key={item} href="#" className="pr-[7px] pl-1.5 text-xs text-[#2b4f86]">
            <Hot text={item} />
          </a>
        ))}
      </nav>
      <div className="flex">
        <StandardBar />
        <ViewBar />
      </div>
      <div className="flex">
        <StateBar />
      </div>

      <div className="flex flex-1">
        <SideBar />
        <main className="flex flex-1 border-t-2 border-r-2 border-t-[#76797e] border-r-white bg-[#ababab] pt-[25px] pr-[150px] pb-[25px] pl-[26px]">
          <article className="flex flex-1 flex-col rounded-t-md border border-[#34507c] bg-[#b7cff2]">
            <div className="relative flex h-[30px] items-center justify-between rounded-t-md border-b border-[#a9cdf0] bg-linear-to-b from-[#dbe6fa] to-[#e3effe] pl-[10px]">
              <Icon name="part" />
              <h2 className="absolute inset-x-0 -translate-x-6 text-center text-xs text-[#687b96]">Деталь БЕЗ ИМЕНИ2</h2>
              <div className="relative pt-1 pr-[7px]"><WindowButtons middle="winMax" /></div>
            </div>
            <div className="flex flex-1 gap-[5px] pr-2 pb-2 pl-2">
              <TreePanel />
              <Viewport />
            </div>
          </article>
        </main>
      </div>

      <PropertyPanel />
      <div className="flex h-5 items-center border-t border-[#6d8fbe] bg-linear-to-b from-[#d8e8fd] via-[#b9d3f7] to-[#cfe2fd] pt-0.5 pl-1.5">
        <p role="status" className="flex-1 text-xs text-[#2b568f]">Укажите центральную точку прямоугольника или введите ее координаты</p>
        <span className="h-4 w-[86px] border-l border-[#8fb0dd]" />
      </div>
    </div>
  );
}
